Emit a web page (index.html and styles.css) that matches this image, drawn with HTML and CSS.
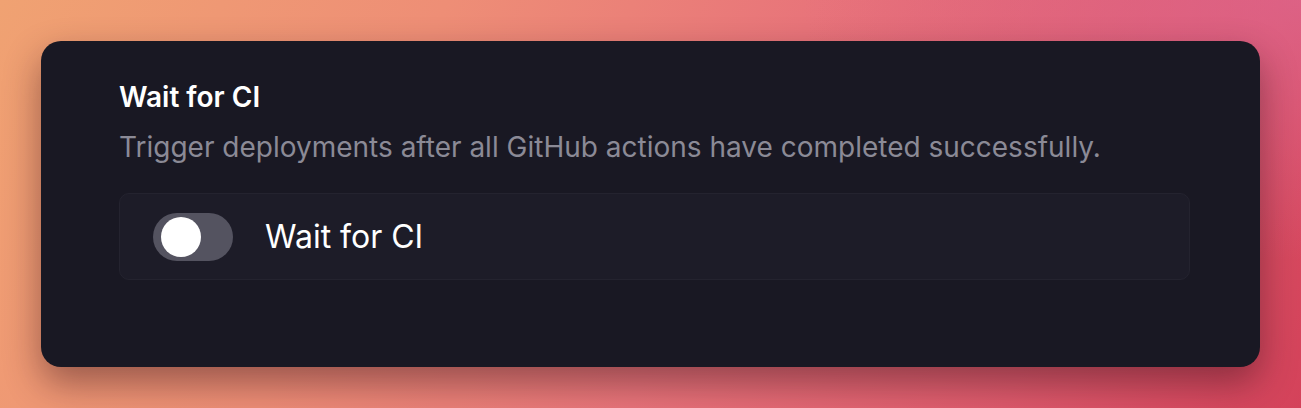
FILE: index.html
```html
<!DOCTYPE html>
<html>
<head>
<meta charset="utf-8">
<link rel="stylesheet" href="styles.css">
</head>
<body>
<div class="stage">
  <div class="card">
    <h2 class="title">Wait for CI</h2>
    <p class="desc">Trigger deployments after all GitHub actions have completed successfully.</p>
    <div class="option">
      <span class="toggle"><span class="knob"></span></span>
      <span class="label">Wait for CI</span>
    </div>
  </div>
</div>
</body>
</html>
```

FILE: styles.css
```css
* { box-sizing: border-box; }
html, body { margin: 0; padding: 0; }
body {
  width: 1301px;
  height: 408px;
  overflow: hidden;
  font-family: Inter, "Noto Sans", sans-serif;
  background:
    radial-gradient(ellipse 500px 260px at 100% 0%, rgba(222, 104, 146, 0.7), rgba(222, 104, 146, 0) 100%),
    linear-gradient(115deg, #f0a272 0%, #ee8e76 30%, #e8747a 55%, #de5a6c 80%, #d4425a 100%);
}
.stage {
  width: 1301px;
  height: 408px;
  padding: 41px 41px 0 41px;
}
.card {
  width: 1219px;
  height: 326px;
  background: #191823;
  border-radius: 20px;
  padding: 39px 70px 0 78px;
  box-shadow: 0 16px 36px rgba(50, 15, 25, 0.45);
}
.title {
  margin: 0;
  font-size: 28px;
  line-height: 34px;
  font-weight: 600;
  color: #ffffff;
}
.desc {
  margin: 16px 0 0 0;
  font-size: 28px;
  line-height: 34px;
  font-weight: 400;
  color: #8b8a96;
}
.option {
  margin-top: 29px;
  height: 87px;
  border: 1px solid #24232f;
  background: #1d1c28;
  border-radius: 10px;
  display: flex;
  align-items: center;
  padding-left: 33px;
  gap: 32px;
}
.toggle {
  width: 80px;
  height: 48px;
  border-radius: 24px;
  background: #545360;
  display: flex;
  align-items: center;
  padding-left: 8px;
}
.knob {
  width: 40px;
  height: 40px;
  border-radius: 50%;
  background: #ffffff;
}
.label {
  font-size: 32px;
  line-height: 38px;
  color: #ffffff;
  font-weight: 400;
}
```
